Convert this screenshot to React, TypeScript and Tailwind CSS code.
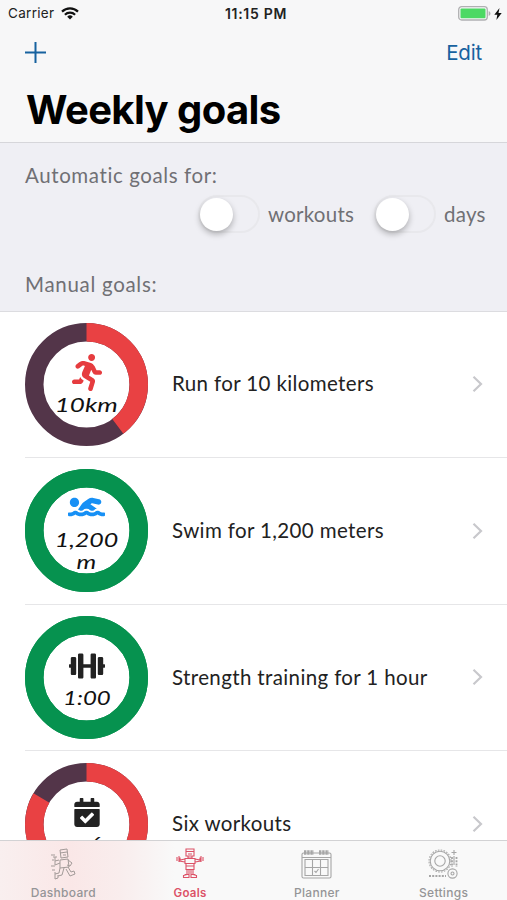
import React from "react";
import { FaCalendarCheck, FaDumbbell, FaRunning, FaSwimmer } from "react-icons/fa";

const CIRCUMFERENCE = 2 * Math.PI * 52.25;

type RingProps = {
  progress: number;
  color: string;
  children: React.ReactNode;
};

function Ring({ progress, color, children }: RingProps) {
  return (
    <div className="relative h-[123px] w-[123px] shrink-0">
      <svg viewBox="0 0 123 123" className="h-full w-full -rotate-90">
        <circle cx="61.5" cy="61.5" r="52.25" fill="none" stroke={progress < 1 ? "#533549" : color} strokeWidth="18.5" />
        <circle
          cx="61.5"
          cy="61.5"
          r="52.25"
          fill="none"
          stroke={color}
          strokeWidth="18.5"
          strokeDasharray={`${CIRCUMFERENCE * progress} ${CIRCUMFERENCE}`}
        />
      </svg>
      <div className="absolute inset-0 flex flex-col items-center">{children}</div>
    </div>
  );
}

function GoalRow({ title, children }: { title: string; children: React.ReactNode }) {
  return (
    <li className="ml-[25px] flex h-[146.6px] shrink-0 items-center border-b border-[#e6e6e8] pr-[24px]">
      {children}
      <span className="ml-[24px] flex-1 whitespace-nowrap pb-px text-[20.5px] tracking-[0.37px] text-[#222]">{title}</span>
      <svg width="11" height="18" viewBox="0 0 11 18" fill="none" stroke="#c8c8cc" strokeWidth="2.2">
        <path d="M1.5 1.8 9 9l-7.500 7.200" />
      </svg>
    </li>
  );
}

function Toggle() {
  return (
    <div className="h-[38px] w-[62px] rounded-full border-2 border-[#e8e8ec] p-px">
      <div className="-ml-px h-[33px] w-[33px] rounded-full bg-white shadow-[0_3px_6px_rgba(0,0,0,0.28)]"></div>
    </div>
  );
}

function DashboardIcon() {
  return (
    <svg width="26" height="32" viewBox="0 0 26 32" fill="none" stroke="#a39b99" strokeWidth="1">
      <path d="M10 2l7-1 1 8-7 1zM10 5l7-1M13 7h3M10 12l8-1 1 8-9 1zM10 15l-5 2v-4l4-1M5 13V9M3 9h4M18 12l4 3-2 3-3-1M10 20l-1 5-4 1M14 20l-2 7-4 1M18 19l3 5 3-1 1 3-5 2-4-7M5 24v7l3-1v-3M1 7h4M2 12h2M1 18h4M2 22h3" />
    </svg>
  );
}

function GoalsIcon() {
  return (
    <svg width="28" height="31" viewBox="0 0 28 31" fill="none" stroke="#dc5267" strokeWidth="1.1">
      <path d="M10 1h8v7h-8zM10 3.500h8M12 6h4M12 8v2h4V8M9 10.500h10v5H9zM10 15.500h8v6h-8zM10 18h8M9 11l-5 1v-2.500M19 11l5 1v-2.500M9 14l-6-1M19 14l6-1M1 9v4M3 8v6M25 8v6M27 9v4M11 21.500v5H8.500M13 21.500v5M15 21.500v5M17 21.500v5h2.500M7.500 29.500v-2l3.500-1h2v3zM20.500 29.500v-2l-3.500-1h-2v3z" />
    </svg>
  );
}

function PlannerIcon() {
  return (
    <svg width="31" height="30" viewBox="0 0 31 30" fill="none" stroke="#a6a6a6" strokeWidth="1.1">
      <rect x="1" y="4" width="29" height="25" rx="1.500" />
      <path d="M1 8.500h29M4 10.500h23v16H4zM4 18.500h23M11.500 10.500v16M19.500 10.500v16M13.500 22l1.500 1.500 2.500-3.500" />
      <path d="M3 3.500h10M18 3.500h10" strokeWidth="4.500" strokeDasharray="2.400 .8" />
    </svg>
  );
}

function SettingsIcon() {
  return (
    <svg width="31" height="30" viewBox="0 0 31 30" fill="none" stroke="#a6a6a6" strokeWidth="1.1">
      <circle cx="12" cy="12" r="9.800" />
      <circle cx="12" cy="12" r="11" strokeDasharray="1.600 1.300" />
      <circle cx="12" cy="12" r="5.200" />
      <circle cx="24.500" cy="24.500" r="4.600" />
      <circle cx="24.500" cy="24.500" r="1.500" />
      <path d="M26 1v5M23.500 3.500h5M26 7v9" />
      <path d="M24 8v10M28.500 8v10M1 27h17" strokeWidth="1.800" strokeDasharray="2 1.200" />
    </svg>
  );
}

export default function App() {
  return (
    <main className="flex h-[900px] w-[507px] flex-col overflow-hidden bg-white font-[Lato,sans-serif]">
      <header className="h-[143px] shrink-0 border-b border-[#d6d6da] bg-[#f7f7f8] font-[Inter,sans-serif]">
        {/* Status bar */}
        <div className="grid h-[27px] grid-cols-3 items-center pl-[8px] pr-[5px] text-[13.5px] text-[#222]">
          <div className="flex items-center gap-[7px]">
            <span className="tracking-[0.3px]">Carrier</span>
            <svg width="18" height="13" viewBox="0 0 18 13" fill="none" stroke="#111" strokeWidth="2.200">
              <path d="M1 4.600a11.500 11.500 0 0 1 16 0M3.900 7.700a7.300 7.300 0 0 1 10.200 0" />
              <path d="M9 12.500 6.200 9.700a4 4 0 0 1 5.600 0z" fill="#111" stroke="none" />
            </svg>
          </div>
          <span className="whitespace-nowrap pl-[2px] text-center text-[14px] font-semibold tracking-[0.7px]">11:15 PM</span>
          <div className="flex items-center justify-end gap-[3px]">
            <svg width="33" height="15" viewBox="0 0 33 15">
              <rect x=".7" y=".7" width="28.600" height="13.300" rx="3" fill="none" stroke="#b0b0b2" strokeWidth="1.300" />
              <rect x="2.500" y="2.500" width="25" height="9.700" rx="1" fill="#4cd964" />
              <path d="M30.700 5v5q1.800-.8 1.800-2.500T30.700 5z" fill="#b0b0b2" />
            </svg>
            <svg width="8" height="12" viewBox="0 0 8 12">
              <path d="M5.500 0 .3 6.800h3L2.400 12l5.300-7H4.500z" fill="#111" />
            </svg>
          </div>
        </div>
        <div className="flex h-[50px] items-center justify-between pl-[25px] pr-[25px] text-[#17629f]">
          <svg width="21" height="21" viewBox="0 0 21 21" stroke="currentColor" strokeWidth="2">
            <path d="M10.500 0v21M0 10.500h21" />
          </svg>
          <span className="pt-[2px] text-[20.5px] tracking-[-0.2px]">Edit</span>
        </div>
        <h1 className="pl-[26px] pt-[7px] text-[40px] font-bold leading-[52px] tracking-[-0.6px] text-black">Weekly goals</h1>
      </header>

      <section className="h-[168.5px] shrink-0 border-b border-[#dcdce0] bg-[#efeff4] pl-[25px] pr-[20px] text-[20.5px] tracking-[0.6px] text-[#707074]">
        <p className="pt-[18px] leading-[28px]">Automatic goals for:</p>
        <div className="mt-[6px] flex h-[38px] items-center justify-end tracking-[0.25px]">
          <Toggle />
          <span className="ml-[8px] w-[106px]">workouts</span>
          <Toggle />
          <span className="ml-[8px] w-[43px]">days</span>
        </div>
        <p className="pt-[37px] leading-[28px] tracking-[0.7px]">Manual goals:</p>
      </section>

      <ul className="flex min-h-0 flex-1 flex-col overflow-hidden">
        <GoalRow title="Run for 10 kilometers">
          <Ring progress={0.397} color="#e94143">
            <FaRunning className="mt-[31px] h-[37px] w-[32px] text-[#e63c3f]" />
            <span className="mt-[2px] scale-x-130 text-[20px] italic leading-[22px] text-[#111]">10km</span>
          </Ring>
        </GoalRow>
        <GoalRow title="Swim for 1,200 meters">
          <Ring progress={1} color="#06924f">
            <FaSwimmer className="mt-[23px] h-[30px] w-[37px] text-[#1790f5]" />
            <span className="mt-[6px] scale-x-125 text-center text-[20px] italic leading-[22px] text-[#111]">
              1,200
              <br />m
            </span>
          </Ring>
        </GoalRow>
        <GoalRow title="Strength training for 1 hour">
          <Ring progress={1} color="#06924f">
            <FaDumbbell className="mt-[32px] h-[36px] w-[36px] text-[#222]" />
            <span className="mt-[2px] scale-x-120 text-[20px] italic leading-[22px] text-[#111]">1:00</span>
          </Ring>
        </GoalRow>
        <GoalRow title="Six workouts">
          <Ring progress={5 / 6} color="#e94143">
            <FaCalendarCheck className="mt-[35px] h-[29px] w-[26px] text-[#222]" />
            <span className="mt-[5px] scale-x-125 text-[20px] italic leading-[22px] text-[#111]">x 6</span>
          </Ring>
        </GoalRow>
      </ul>

      {/* Tab bar */}
      <nav className="grid h-[60px] shrink-0 grid-cols-4 border-t border-[#d2d2d4] bg-[#f9f9f9] bg-[linear-gradient(90deg,#f9efef_0px,#fae7e7_70px,#f9eded_120px,#f9f9f9_175px)] font-[Inter,sans-serif] text-[12px] font-medium tracking-[0.3px] text-[#959597]">
        <div className="flex flex-col items-center">
          <div className="flex h-[45px] items-center"><DashboardIcon /></div>
          <span className="leading-[14px]">Dashboard</span>
        </div>
        <div className="flex flex-col items-center font-semibold text-[#dc5267]">
          <div className="flex h-[45px] items-center"><GoalsIcon /></div>
          <span className="text-[11.5px] leading-[14px]">Goals</span>
        </div>
        <div className="flex flex-col items-center">
          <div className="flex h-[45px] items-center"><PlannerIcon /></div>
          <span className="leading-[14px]">Planner</span>
        </div>
        <div className="flex flex-col items-center">
          <div className="flex h-[45px] items-center"><SettingsIcon /></div>
          <span className="leading-[14px]">Settings</span>
        </div>
      </nav>
    </main>
  );
}
